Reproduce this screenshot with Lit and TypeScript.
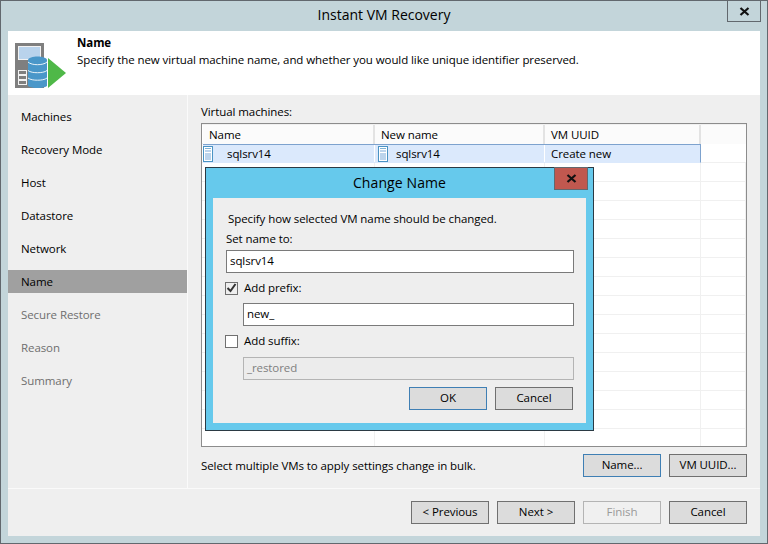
import { LitElement, html, css } from "lit";
import { customElement } from "lit/decorators.js";

const vmIcon = html`<svg class="vm" width="10" height="16" viewBox="0 0 10 16"><rect x="0.5" y="0.5" width="9" height="15" fill="#fff" stroke="#4a93c4"/><rect x="2" y="2" width="6" height="1" fill="#4a93c4" opacity=".7"/><rect x="2" y="4" width="6" height="2" fill="#bcd4ec"/><rect x="2" y="7" width="6" height="7" fill="#bcd4ec"/></svg>`;

@customElement("app-root")
export class AppRoot extends LitElement {
  static styles = css`
    :host { display: block; width: 768px; height: 544px; font: 11.5px/16px "Open Sans", "Noto Sans", sans-serif; letter-spacing: -0.08px; color: #000; }
    * { box-sizing: border-box; }
    .win { position: relative; width: 768px; height: 544px; background: #c3d5da; border: 1px solid #62686e; display: flex; flex-direction: column; padding: 0 7px 7px; }
    .title { height: 30px; flex: none; display: flex; align-items: center; justify-content: center; font-size: 14px; letter-spacing: 0; padding-bottom: 2px; }
    .close { position: absolute; right: 6px; top: -1px; width: 34px; height: 22px; border: 1px solid #62686e; display: flex; align-items: center; justify-content: center; }
    .client { flex: 1; display: flex; flex-direction: column; background: #efefef; min-height: 0; }
    .head { height: 64px; flex: none; background: #fff; display: flex; padding: 3px 0 0 7px; }
    .head .logo { margin-top: 9px; margin-right: 10px; flex: none; }
    .head b { display: block; font-weight: 700; line-height: 17px; }
    .head p { margin: 1px 0 0; line-height: 16px; }
    .body { flex: 1; display: flex; min-height: 0; }
    nav { width: 179px; flex: none; padding-top: 10px; }
    nav div { height: 23px; margin-bottom: 10px; padding-left: 13px; display: flex; align-items: center; }
    nav .sel { background: #a0a0a0; }
    nav .off { color: #6e6e6e; }
    .main { flex: 1; min-width: 0; border-left: 1px solid #fafafa; display: flex; flex-direction: column; padding: 9px 13px 0 13px; }
    .lbl { height: 16px; margin-bottom: 3px; }
    .grid { height: 324px; background-color: #fff; border: 1px solid #8c8c8c; display: flex; flex-direction: column; padding: 1px 0 0 1px; flex: none; overflow: hidden;
      background-image: linear-gradient(to bottom, transparent 18px, #f0f0f0 18px); background-position: 0 1px; background-size: 100% 19px; }
    .row { display: grid; grid-template-columns: 172px 170px 156px 45px; }
    .hdr { height: 19px; background: #fbfbfb; }
    .hdr span { border-right: 2px solid #e3e3e3; padding: 1px 0 0 6px; line-height: 18px; }
    .hdr span:last-child { border-right: 0; }
    .selrow { height: 19px; width: 498px; grid-template-columns: 172px 170px 156px; background: #dbe9fc; border-top: 1px solid #7da2ce; border-bottom: 1px solid #dbe9fc; border-right: 1px solid #7da2ce; }
    .selrow span { display: flex; align-items: center; border-right: 1px solid #fff; }
    .selrow span:last-child { border-right: 0; padding-left: 6px; }
    .selrow .nm { font-style: normal; margin-left: 14px; }
    .selrow .nm.b { margin-left: 8px; }
    .selrow span:nth-child(2) { padding-left: 3px; }
    .selrow .vm { flex: none; }
    .cols { flex: 1; display: grid; grid-template-columns: 172px 170px 156px 45px; }
    .cols i { border-right: 1px solid #f0f0f0; }
    .foot { height: 23px; margin-top: 7px; display: flex; align-items: center; }
    .foot .txt { flex: 1; }
    .btn { width: 78px; height: 23px; padding-bottom: 1px; background: #dcdcdc; border: 1px solid #707070; display: flex; align-items: center; justify-content: center; flex: none; }
    .btn.pri { border-color: #3f7fb4; }
    .btn.dis { background: #f0f0f0; border-color: #b4b4b4; color: #9a9a9a; }
    .foot .btn + .btn { margin-left: 8px; }
    .rule { height: 1px; background: #fafafa; flex: none; }
    .bar { height: 47px; flex: none; display: flex; justify-content: flex-end; gap: 8px; padding: 12px 13px 0 0; }
    .dlg { position: absolute; left: 204px; top: 166px; width: 389px; height: 264px; background: #66c9ec; border: 1px solid #2b3a44; padding: 30px 7px 7px; }
    .dlg .t { position: absolute; left: 0; right: 0; top: 0; height: 30px; display: flex; align-items: center; justify-content: center; font-size: 14px; letter-spacing: 0.1px; }
    .dlg .x { position: absolute; right: 5px; top: -1px; width: 34px; height: 23px; background: #c0584f; border: 1px solid #62686e; display: flex; align-items: center; justify-content: center; }
    .dc { height: 225px; background: #eee; padding: 13px 12px 0 13px; display: flex; flex-direction: column; }
    .dc .intro { padding-left: 2px; height: 16px; margin-bottom: 4px; }
    .dc label { height: 16px; display: block; margin-bottom: 3px; }
    .inp { height: 23px; background: #fff; border: 1px solid #7a7a7a; padding-left: 3px; line-height: 19px; flex: none; }
    .ind { margin-left: 17px; }
    .inp.dis { background: #ececec; border-color: #b4b4b4; color: #808080; }
    .chk { display: flex; align-items: center; gap: 6px; height: 16px; margin-left: -1px; }
    .box { width: 13px; height: 13px; border: 1px solid #707070; background: #fff; display: flex; align-items: center; justify-content: center; flex: none; }
    .box.on { background: #eee; }
    .m7 { margin-top: 7px; }
    .m8 { margin-top: 8px; }
    .acts { display: flex; justify-content: flex-end; gap: 8px; margin: 7px 1px 0 0; }
  `;

  render() {
    return html`<div class="win">
      <div class="title">Instant VM Recovery</div>
      <div class="close">${this.x()}</div>
      <div class="client">
        <div class="head">
          <svg class="logo" width="52" height="46" viewBox="0 0 52 46">
            <rect x="0" y="0" width="29" height="45" fill="#7f7f7f"/>
            <rect x="3.500" y="3.500" width="22" height="13" fill="#b9d3ec" stroke="#f2f2f2"/>
            <rect x="3.500" y="27.500" width="8" height="4" fill="none" stroke="#f2f2f2"/>
            <rect x="3.500" y="32.500" width="8" height="4" fill="none" stroke="#f2f2f2"/>
            <rect x="3.500" y="37.500" width="8" height="4" fill="none" stroke="#f2f2f2"/>
            <path d="M33 15v30l18-15z" fill="#4fb848"/>
            <path d="M13 17c0-2 5-3.500 9.500-3.500s9.500 1.500 9.500 3.500v26c-2 1.500-6 2-9.500 2s-7.500-.5-9.500-2z" fill="#4a97c9"/>
            <path d="M13 19c2 2 6 2.700 9.500 2.700s7.500-.7 9.500-2.700M13 27.500c2 1.700 6 2.200 9.500 2.200s7.500-.5 9.500-2.200M13 35c2 1.700 6 2.200 9.500 2.200s7.500-.5 9.500-2.200" fill="none" stroke="#e8f2f8"/>
          </svg>
          <div>
            <b>Name</b>
            <p>Specify the new virtual machine name, and whether you would like unique identifier preserved.</p>
          </div>
        </div>
        <div class="body">
          <nav>
            <div>Machines</div><div>Recovery Mode</div><div>Host</div><div>Datastore</div><div>Network</div>
            <div class="sel">Name</div>
            <div class="off">Secure Restore</div><div class="off">Reason</div><div class="off">Summary</div>
          </nav>
          <div class="main">
            <div class="lbl">Virtual machines:</div>
            <div class="grid">
              <div class="row hdr"><span>Name</span><span>New name</span><span>VM UUID</span><span></span></div>
              <div class="row selrow">
                <span>${vmIcon}<em class="nm">sqlsrv14</em></span>
                <span>${vmIcon}<em class="nm b">sqlsrv14</em></span>
                <span>Create new</span>
              </div>
              <div class="cols"><i></i><i></i><i></i><i></i></div>
            </div>
            <div class="foot">
              <div class="txt">Select multiple VMs to apply settings change in bulk.</div>
              <div class="btn pri">Name...</div><div class="btn">VM UUID...</div>
            </div>
          </div>
        </div>
        <div class="rule"></div>
        <div class="bar">
          <div class="btn">&lt; Previous</div><div class="btn">Next &gt;</div><div class="btn dis">Finish</div><div class="btn">Cancel</div>
        </div>
      </div>
      <div class="dlg">
        <div class="t">Change Name</div>
        <div class="x">${this.x()}</div>
        <div class="dc">
          <div class="intro">Specify how selected VM name should be changed.</div>
          <label>Set name to:</label>
          <div class="inp">sqlsrv14</div>
          <div class="chk m7"><span class="box on"><svg width="11" height="10" viewBox="0 0 11 10"><path d="M1.500 5l3 3 5-7" fill="none" stroke="#333" stroke-width="2"/></svg></span>Add prefix:</div>
          <div class="inp ind m7">new_</div>
          <div class="chk m7"><span class="box"></span>Add suffix:</div>
          <div class="inp ind dis m8">_restored</div>
          <div class="acts"><div class="btn pri">OK</div><div class="btn">Cancel</div></div>
        </div>
      </div>
    </div>`;
  }

  x() {
    return html`<svg width="11" height="9" viewBox="0 0 11 9"><path d="M1.500 1l8 7M9.500 1l-8 7" stroke="#111" stroke-width="2.200" fill="none"/></svg>`;
  }
}
